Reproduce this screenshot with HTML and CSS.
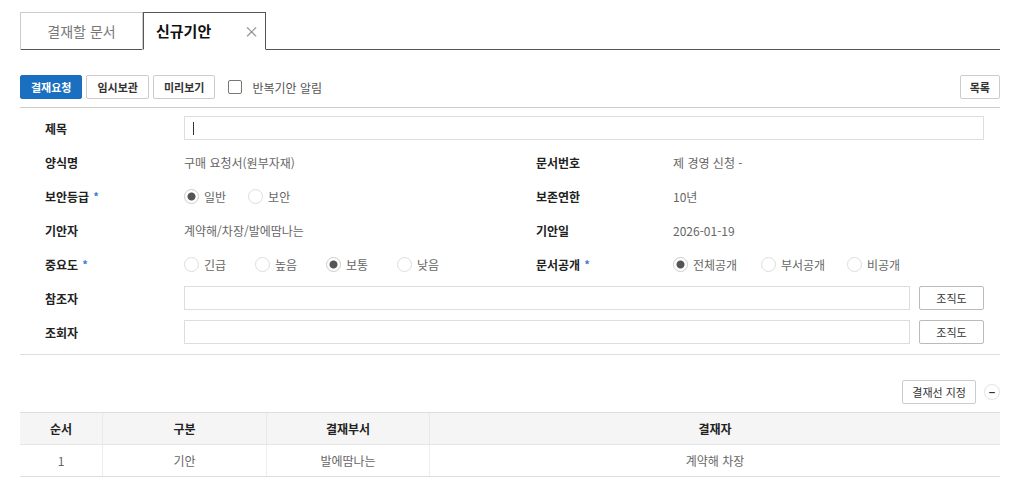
FILE: index.html
```html
<!DOCTYPE html>
<html lang="ko">
  <head>
    <meta charset="UTF-8">
    <title>신규기안</title>
    <link rel="stylesheet" href="styles.css">
  </head>
  <body>
    <div id="wrap">
      <div class="tabs">
        <div class="tab">결재할 문서</div>
        <div class="tab active">신규기안 <span class="tab-close">×</span></div>
      </div>

      <div class="toolbar">
        <button class="btn btn-primary">결재요청</button>
        <button class="btn">임시보관</button>
        <button class="btn">미리보기</button>
        <label class="check"><span class="check-box"></span>반복기안 알림</label>
        <button class="btn btn-right">목록</button>
      </div>

      <div class="form">
        <div class="lbl">제목</div>
        <div class="val wide"><div class="input"><span class="caret"></span></div></div>

        <div class="lbl">양식명</div>
        <div class="val">구매 요청서(원부자재)</div>
        <div class="lbl">문서번호</div>
        <div class="val">제 경영 신청 -</div>

        <div class="lbl">보안등급 <em>*</em></div>
        <div class="val">
          <span class="radio on">일반</span>
          <span class="radio">보안</span>
        </div>
        <div class="lbl">보존연한</div>
        <div class="val">10년</div>

        <div class="lbl">기안자</div>
        <div class="val">계약해/차장/발에땀나는</div>
        <div class="lbl">기안일</div>
        <div class="val">2026-01-19</div>

        <div class="lbl">중요도 <em>*</em></div>
        <div class="val">
          <span class="radio w71">긴급</span>
          <span class="radio w71">높음</span>
          <span class="radio on w71">보통</span>
          <span class="radio">낮음</span>
        </div>
        <div class="lbl">문서공개 <em>*</em></div>
        <div class="val">
          <span class="radio on w88">전체공개</span>
          <span class="radio w86">부서공개</span>
          <span class="radio">비공개</span>
        </div>

        <div class="lbl">참조자</div>
        <div class="val wide"><div class="input"></div><button class="btn btn-org">조직도</button></div>

        <div class="lbl">조회자</div>
        <div class="val wide"><div class="input"></div><button class="btn btn-org">조직도</button></div>
      </div>

      <div class="line-tools">
        <button class="btn btn-line">결재선 지정</button>
        <span class="minus">−</span>
      </div>

      <table class="line-table">
        <thead>
          <tr>
            <th class="c1">순서</th>
            <th class="c2">구분</th>
            <th class="c3">결재부서</th>
            <th>결재자</th>
          </tr>
        </thead>
        <tbody>
          <tr>
            <td>1</td>
            <td>기안</td>
            <td>발에땀나는</td>
            <td>계약해 차장</td>
          </tr>
        </tbody>
      </table>
    </div>
  </body>
</html>
```

FILE: styles.css
```css
body {
  margin: 0;
  font-family: "Noto Sans CJK KR", "Noto Sans", sans-serif;
  font-size: 12px;
  color: #222;
  background-color: #fff;
}
#wrap {
  width: 980px;
  padding: 12px 0 0 20px;
}
.tabs {
  display: flex;
  border-bottom: 1px solid #555;
  height: 37px;
}
.tab {
  width: 123px;
  box-sizing: border-box;
  height: 38px;
  border: 1px solid #ccc;
  border-bottom: none;
  text-align: center;
  line-height: 36px;
  font-size: 14px;
  color: #777;
}
.tab + .tab {
  border-left: none;
}
.tab.active {
  border: 1px solid #555;
  border-bottom: 1px solid #fff;
  color: #111;
  font-weight: bold;
  font-size: 15px;
  text-align: left;
  padding-left: 12px;
  position: relative;
}
.tab-close {
  position: absolute;
  right: 6px;
  top: 0;
  font-weight: normal;
  color: #888;
  font-size: 15px;
}
.toolbar {
  display: flex;
  align-items: center;
  margin-top: 25px;
  padding-bottom: 8px;
  border-bottom: 1px solid #ccc;
}
.btn {
  height: 24px;
  padding: 0 10px;
  margin-right: 4px;
  border: 1px solid #ccc;
  border-radius: 2px;
  background-color: #fff;
  font-family: inherit;
  font-size: 11px;
  font-weight: bold;
  color: #333;
  box-sizing: border-box;
}
.btn-primary {
  background-color: #1a6fc0;
  border-color: #1a6fc0;
  color: #fff;
}
.btn-right {
  margin-left: auto;
  margin-right: 0;
  padding: 0 9px;
}
.check {
  display: flex;
  align-items: center;
  margin-left: 9px;
  color: #555;
  font-size: 12px;
}
.check-box {
  width: 12px;
  height: 12px;
  border: 1px solid #777;
  border-radius: 2px;
  margin-right: 10px;
}
.form {
  display: grid;
  grid-template-columns: 139px 352px 137px 1fr;
  grid-auto-rows: 34px;
  padding: 3px 16px 5px 25px;
  border-bottom: 1px solid #ddd;
}
.lbl {
  display: flex;
  align-items: center;
  font-weight: bold;
  color: #222;
}
.lbl em {
  font-style: normal;
  color: #3a7bd5;
  margin-left: 4px;
  font-size: 11px;
}
.val {
  display: flex;
  align-items: center;
  color: #666;
}
.val.wide {
  grid-column: 2 / 5;
}
.input {
  flex: 1;
  height: 24px;
  border: 1px solid #ddd;
  box-sizing: border-box;
  display: flex;
  align-items: center;
  padding-left: 8px;
}
.caret {
  width: 1px;
  height: 13px;
  background-color: #333;
}
.btn-org {
  margin: 0 0 0 9px;
  width: 65px;
  font-weight: normal;
  border-color: #bbb;
}
.radio {
  display: inline-flex;
  align-items: center;
  margin-right: 22px;
  color: #666;
}
.radio::before {
  content: "";
  width: 15px;
  height: 15px;
  border: 1px solid #ddd;
  border-radius: 50%;
  margin-right: 5px;
  box-sizing: border-box;
}
.radio.on::before {
  border-color: #ccc;
  background: radial-gradient(circle, #555 3.5px, #fff 4.5px);
}
.radio.w71 {
  width: 71px;
  margin-right: 0;
}
.radio.w88 {
  width: 88px;
  margin-right: 0;
}
.radio.w86 {
  width: 86px;
  margin-right: 0;
}
.line-tools {
  display: flex;
  justify-content: flex-end;
  align-items: center;
  margin-top: 25px;
  height: 24px;
}
.btn-line {
  margin-right: 8px;
  font-weight: normal;
  padding: 0 9px;
}
.minus {
  width: 14px;
  height: 14px;
  border: 1px solid #e4e4e4;
  border-radius: 50%;
  display: flex;
  align-items: center;
  justify-content: center;
  font-size: 11px;
  font-weight: bold;
  color: #333;
}
.line-table {
  width: 100%;
  table-layout: fixed;
  margin-top: 8px;
  border-collapse: collapse;
  font-size: 12px;
}
.line-table th {
  height: 31px;
  padding: 0;
  background-color: #f5f5f5;
  border-top: 1px solid #ddd;
  border-bottom: 1px solid #e5e5e5;
  border-left: 1px solid #eaeaea;
  font-weight: bold;
  color: #222;
}
.line-table td {
  height: 31px;
  padding: 0;
  text-align: center;
  color: #666;
  border-bottom: 1px solid #ddd;
  border-left: 1px solid #eee;
}
.line-table th:first-child,
.line-table td:first-child {
  border-left: none;
}
.c1 {
  width: 82px;
}
.c2 {
  width: 163px;
}
.c3 {
  width: 162px;
}
```
